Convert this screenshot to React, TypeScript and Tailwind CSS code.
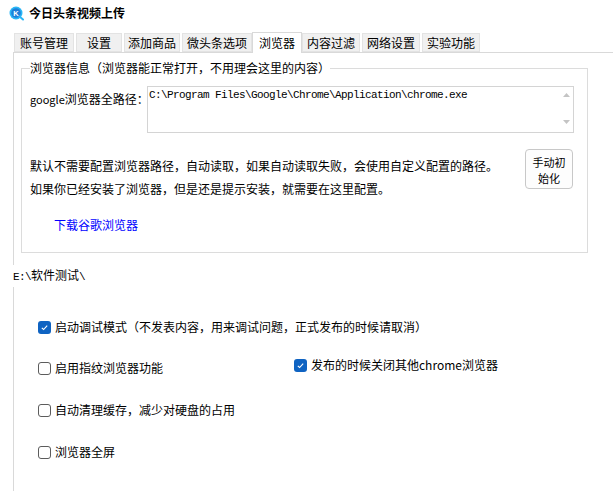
import React from 'react';

const tabs = [
  { label: '账号管理', w: 'w-[60px]' },
  { label: '设置', w: 'w-[46px]' },
  { label: '添加商品', w: 'w-[56px]' },
  { label: '微头条选项', w: 'w-[70px]' },
  { label: '浏览器', w: 'w-[50px]', active: true },
  { label: '内容过滤', w: 'w-[58px]' },
  { label: '网络设置', w: 'w-[58px]' },
  { label: '实验功能', w: 'w-[58px]' },
];

const Logo = () => (
  <svg width="15" height="15" viewBox="0 0 15 15">
    <circle cx="7" cy="7" r="6.5" fill="#29b6f6" />
    <circle cx="7" cy="7" r="4.8" fill="#1e7fd8" />
    <path d="M10.5 10.5 L14 13.5" stroke="#29b6f6" strokeWidth="2" strokeLinecap="round" />
    <text x="7" y="9.8" textAnchor="middle" fontSize="7.5" fontWeight="700" fill="#fff" fontFamily="Liberation Sans, sans-serif">K</text>
  </svg>
);

const Check = ({ checked, label }: { checked?: boolean; label: React.ReactNode }) => (
  <div className="flex items-center gap-[4px] leading-[16px]">
    {checked ? (
      <span className="w-[13px] h-[13px] rounded-[3px] bg-[#0f63c2] flex items-center justify-center">
        <svg width="9" height="9" viewBox="0 0 9 9">
          <path d="M1.8 4.8 L3.6 6.5 L7.2 2.6" stroke="#fff" strokeWidth="1.1" fill="none" />
        </svg>
      </span>
    ) : (
      <span className="w-[13px] h-[13px] rounded-[3px] border border-[#5c5c5c] bg-white" />
    )}
    <span>{label}</span>
  </div>
);

const App = () => {
  return (
    <div className="w-[613px] h-[491px] bg-white flex flex-col overflow-hidden text-[12px] text-black font-['Noto_Sans_CJK_SC',sans-serif]">
      {/* title bar */}
      <div className="h-[26px] flex items-center pl-[9px] gap-[5px] shrink-0">
        <Logo />
        <span className="font-bold text-[12px]">今日头条视频上传</span>
      </div>

      {/* tabs */}
      <div className="pt-[6px] pl-[14px] flex items-start gap-[2px] shrink-0">
        {tabs.map((t) =>
          t.active ? (
            <div
              key={t.label}
              className={`${t.w} h-[21px] -mx-[2px] relative z-10 bg-white border border-b-0 border-[#d9d9d9] flex items-center justify-center leading-none`}
            >
              {t.label}
            </div>
          ) : (
            <div
              key={t.label}
              className={`${t.w} h-[19px] mt-[1px] bg-[#f0f0f0] border border-[#e3e3e3] flex items-center justify-center leading-none`}
            >
              {t.label}
            </div>
          )
        )}
      </div>

      {/* tab panel */}
      <div className="flex-1 -mt-[1px] ml-[13px] border-l border-t border-[#d9d9d9] flex flex-col">
        <fieldset className="ml-[7px] mt-[7px] w-[567px] h-[193px] border border-[#dcdcdc] px-[8px] flex flex-col">
          <legend className="leading-[16px] px-0">浏览器信息（浏览器能正常打开，不用理会这里的内容）</legend>

          <div className="flex items-start mt-[10px]">
            <span className="w-[117px] mt-[5px] leading-[16px] whitespace-nowrap">
              <span className="text-[11px]">google</span>浏览器全路径：
            </span>
            <div className="w-[427px] h-[47px] border border-[#d4d4d4] flex">
              <div className="flex-1 pl-[1px] pt-[1px] leading-[14px] text-[11px] tracking-[-0.6px] font-['Liberation_Mono',monospace]">
                C:\Program Files\Google\Chrome\Application\chrome.exe
              </div>
              <div className="w-[14px] flex flex-col items-center justify-between pt-[6px] pb-[8px]">
                <svg width="7" height="4" viewBox="0 0 7 4"><path d="M0 4 L3.5 0 L7 4 Z" fill="#c4c4c4" /></svg>
                <svg width="7" height="4" viewBox="0 0 7 4"><path d="M0 0 L3.5 4 L7 0 Z" fill="#c4c4c4" /></svg>
              </div>
            </div>
          </div>

          <div className="flex items-start mt-[16px]">
            <div className="flex-1 pt-[5px] leading-[23px]">
              <p>默认不需要配置浏览器路径，自动读取，如果自动读取失败，会使用自定义配置的路径。</p>
              <p>如果你已经安装了浏览器，但是还是提示安装，就需要在这里配置。</p>
            </div>
            <button className="w-[48px] h-[40px] mr-[6px] border border-[#c8c8c8] rounded-[4px] bg-[#fdfdfd] text-[11px] leading-[16px] pt-[2px] flex flex-col items-center justify-center">
              <span>手动初</span>
              <span>始化</span>
            </button>
          </div>

          <a className="mt-[17px] ml-[24px] w-fit leading-[16px] text-[#0000ff]">下载谷歌浏览器</a>
        </fieldset>

        <div className="mt-[12px] -ml-[1px] w-fit bg-white pr-[2px] leading-[20px]">
          <span className="font-['Liberation_Mono',monospace] text-[11px] tracking-[-0.6px]">E:\</span>软件测试<span className="font-['Liberation_Mono',monospace] text-[11px]">\</span>
        </div>

        <div className="pl-[24px] flex flex-col">
          <div className="mt-[32px]">
            <Check checked label="启动调试模式（不发表内容，用来调试问题，正式发布的时候请取消）" />
          </div>
          <div className="mt-[22px] flex items-start">
            <div className="w-[256px] mt-[3px]">
              <Check label="启用指纹浏览器功能" />
            </div>
            <Check checked label="发布的时候关闭其他chrome浏览器" />
          </div>
          <div className="mt-[26px]">
            <Check label="自动清理缓存，减少对硬盘的占用" />
          </div>
          <div className="mt-[26px]">
            <Check label="浏览器全屏" />
          </div>
        </div>
      </div>
    </div>
  );
};

export default App;
